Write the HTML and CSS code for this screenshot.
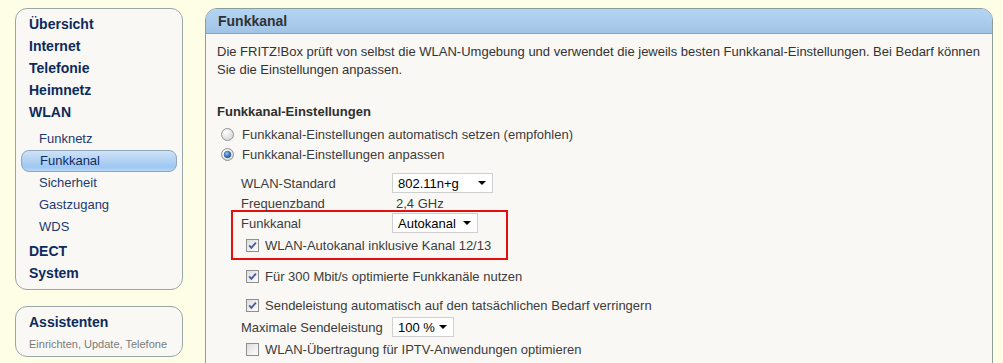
FILE: index.html
```html
<!DOCTYPE html>
<html lang="de">
<head>
    <meta charset="UTF-8">
    <meta name="viewport" content="width=device-width, initial-scale=1.0">
    <title>FRITZ!Box - Funkkanal</title>
    <link rel="stylesheet" href="styles.css">
</head>
<body>
    <div class="page">
        <aside class="sidebar">
            <nav class="box menu">
                <a class="menu-main">Übersicht</a>
                <a class="menu-main">Internet</a>
                <a class="menu-main">Telefonie</a>
                <a class="menu-main">Heimnetz</a>
                <a class="menu-main">WLAN</a>
                <ul class="submenu">
                    <li>Funknetz</li>
                    <li class="active">Funkkanal</li>
                    <li>Sicherheit</li>
                    <li>Gastzugang</li>
                    <li>WDS</li>
                </ul>
                <a class="menu-main menu-after">DECT</a>
                <a class="menu-main">System</a>
            </nav>
            <div class="box assist">
                <a class="menu-main">Assistenten</a>
                <div class="assist-sub">Einrichten, Update, Telefone</div>
            </div>
        </aside>

        <main class="panel">
            <h1 class="panel-title">Funkkanal</h1>
            <div class="panel-body">
                <p class="intro">Die FRITZ!Box prüft von selbst die WLAN-Umgebung und verwendet die jeweils besten Funkkanal-Einstellungen. Bei Bedarf können Sie die Einstellungen anpassen.</p>

                <h2 class="section-title">Funkkanal-Einstellungen</h2>

                <div class="radio-row">
                    <svg class="radio" width="13" height="13" viewBox="0 0 13 13">
                        <defs>
                            <radialGradient id="radioBg" cx="0.35" cy="0.3" r="0.85">
                                <stop offset="0" stop-color="#ffffff"/>
                                <stop offset="1" stop-color="#cfcfcf"/>
                            </radialGradient>
                            <radialGradient id="radioDot" cx="0.35" cy="0.3" r="0.8">
                                <stop offset="0" stop-color="#8cc6f5"/>
                                <stop offset="1" stop-color="#0b4a96"/>
                            </radialGradient>
                            <linearGradient id="checkBg" x1="0" y1="0" x2="1" y2="1">
                                <stop offset="0" stop-color="#dcdcdc"/>
                                <stop offset="1" stop-color="#ffffff"/>
                            </linearGradient>
                        </defs>
                        <circle cx="6.5" cy="6.5" r="6" fill="url(#radioBg)" stroke="#929393"/>
                    </svg>
                    <span>Funkkanal-Einstellungen automatisch setzen (empfohlen)</span>
                </div>
                <div class="radio-row">
                    <svg class="radio" width="13" height="13" viewBox="0 0 13 13">
                        <circle cx="6.5" cy="6.5" r="6" fill="url(#radioBg)" stroke="#929393"/>
                        <circle cx="6.5" cy="6.5" r="3.3" fill="url(#radioDot)" stroke="#1d4f86" stroke-width="0.6"/>
                    </svg>
                    <span>Funkkanal-Einstellungen anpassen</span>
                </div>

                <div class="settings">
                    <div class="field">
                        <span class="field-label">WLAN-Standard</span>
                        <span class="select select-wide">802.11n+g
                            <svg width="8" height="4" viewBox="0 0 8 4"><path d="M0 0h8L4 4z" fill="#000"/></svg>
                        </span>
                    </div>
                    <div class="field">
                        <span class="field-label">Frequenzband</span>
                        <span class="field-value">2,4 GHz</span>
                    </div>

                    <div class="highlight">
                        <div class="field">
                            <span class="field-label">Funkkanal</span>
                            <span class="select select-mid">Autokanal
                                <svg width="8" height="4" viewBox="0 0 8 4"><path d="M0 0h8L4 4z" fill="#000"/></svg>
                            </span>
                        </div>
                        <div class="check-row check-tight">
                            <svg class="check" width="13" height="13" viewBox="0 0 13 13">
                                <rect x="0.5" y="0.5" width="12" height="12" fill="url(#checkBg)" stroke="#8e8f8f"/>
                                <path d="M3.2 6.4 L5.4 8.9 L9.9 3.6" fill="none" stroke="#46579f" stroke-width="1.7"/>
                            </svg>
                            <span>WLAN-Autokanal inklusive Kanal 12/13</span>
                        </div>
                    </div>

                    <div class="check-row check-after">
                        <svg class="check" width="13" height="13" viewBox="0 0 13 13">
                            <rect x="0.5" y="0.5" width="12" height="12" fill="url(#checkBg)" stroke="#8e8f8f"/>
                            <path d="M3.2 6.4 L5.4 8.9 L9.9 3.6" fill="none" stroke="#46579f" stroke-width="1.7"/>
                        </svg>
                        <span>Für 300 Mbit/s optimierte Funkkanäle nutzen</span>
                    </div>
                    <div class="check-row check-gap">
                        <svg class="check" width="13" height="13" viewBox="0 0 13 13">
                            <rect x="0.5" y="0.5" width="12" height="12" fill="url(#checkBg)" stroke="#8e8f8f"/>
                            <path d="M3.2 6.4 L5.4 8.9 L9.9 3.6" fill="none" stroke="#46579f" stroke-width="1.7"/>
                        </svg>
                        <span>Sendeleistung automatisch auf den tatsächlichen Bedarf verringern</span>
                    </div>
                    <div class="field field-tight">
                        <span class="field-label">Maximale Sendeleistung</span>
                        <span class="select select-narrow">100 %
                            <svg width="8" height="4" viewBox="0 0 8 4"><path d="M0 0h8L4 4z" fill="#000"/></svg>
                        </span>
                    </div>
                    <div class="check-row check-tight">
                        <svg class="check" width="13" height="13" viewBox="0 0 13 13">
                            <rect x="0.5" y="0.5" width="12" height="12" fill="url(#checkBg)" stroke="#8e8f8f"/>
                        </svg>
                        <span>WLAN-Übertragung für IPTV-Anwendungen optimieren</span>
                    </div>
                </div>
            </div>
        </main>
    </div>
</body>
</html>
```

FILE: styles.css
```css
* {
    margin: 0;
    padding: 0;
    box-sizing: border-box;
}

html, body {
    height: 100%;
    overflow: hidden;
}

body {
    font-family: 'Liberation Sans', Arial, sans-serif;
    font-size: 13px;
    background: #fefee7;
    color: #333;
}

.page {
    display: flex;
    align-items: flex-start;
    gap: 22px;
    padding: 8px 10px 0 15px;
}

/* Linke Navigation */
.sidebar {
    width: 168px;
    flex-shrink: 0;
    display: flex;
    flex-direction: column;
    gap: 16px;
}

.box {
    background: #f9f8f4;
    border: 1px solid #97a7a7;
    border-radius: 12px;
}

.menu {
    padding: 4px 0 5px;
}

.menu-main {
    display: block;
    height: 22px;
    line-height: 22px;
    padding-left: 13px;
    font-size: 14px;
    font-weight: bold;
    color: #0c2b5c;
}

.menu-after {
    margin-top: 2px;
}

.submenu {
    list-style: none;
    margin-top: 5px;
}

.submenu li {
    height: 22px;
    line-height: 20px;
    margin: 0 5px;
    padding-left: 17px;
    border: 1px solid transparent;
    border-radius: 8px;
    color: #1b3a72;
}

.submenu li.active {
    border-color: #8ea6ba;
    background: linear-gradient(to bottom, #cfe2f6 0%, #b3d3f3 45%, #9ec8f2 80%, #b9d8f5 100%);
    padding-left: 18px;
    color: #102c66;
}

.assist {
    padding: 4px 0 4px;
}

.assist-sub {
    margin-top: 4px;
    padding-left: 13px;
    font-size: 11px;
    line-height: 15px;
    color: #7b7b7b;
}

/* Inhaltsbereich */
.panel {
    flex: 1;
    min-height: 420px;
    background: #f9f8f5;
    border: 1px solid #8d9c9c;
    border-radius: 12px 12px 0 0;
}

.panel-title {
    height: 25px;
    line-height: 24px;
    padding-left: 12px;
    font-size: 14px;
    color: #2f3336;
    background: linear-gradient(to bottom, #b4d4f4 0%, #a2c4e4 100%);
    border-bottom: 1px solid #8fa3b0;
    border-radius: 11px 11px 0 0;
}

.panel-body {
    padding: 9px 11px 0;
}

.intro {
    line-height: 18px;
    color: #333;
}

.section-title {
    margin-top: 24px;
    font-size: 13px;
    line-height: 18px;
    color: #2e2e2e;
}

.radio-row {
    display: flex;
    align-items: center;
    gap: 8px;
    height: 20px;
    padding-left: 4px;
    color: #3c3c3c;
}

.radio-row:first-of-type {
    margin-top: 3px;
}

.settings {
    margin-top: 9px;
    padding-left: 24px;
    color: #3c3c3c;
}

.field {
    display: flex;
    align-items: center;
    height: 20px;
}

.field-tight {
    margin-top: 2px;
}

.field-label {
    width: 151px;
    flex-shrink: 0;
}

.field-value {
    padding-left: 4px;
}

.select {
    display: inline-flex;
    align-items: center;
    justify-content: space-between;
    height: 20px;
    padding: 0 6px 0 5px;
    background: #fff;
    border: 1px solid #cfcfcf;
    color: #000;
}

.select-wide {
    width: 101px;
}

.select-mid {
    width: 86px;
}

.select-narrow {
    width: 62px;
}

.highlight {
    width: 277px;
    margin: -3px 0 0 -10px;
    padding: 1px 0 3px 8px;
    border: 2px solid #e41010;
}

.check-row {
    display: flex;
    align-items: center;
    gap: 6px;
    height: 20px;
    padding-left: 5px;
}

.check-tight {
    margin-top: 2px;
}

.check-after {
    margin-top: 6px;
}

.check-gap {
    margin-top: 9px;
}

.check, .radio {
    flex-shrink: 0;
}
```
